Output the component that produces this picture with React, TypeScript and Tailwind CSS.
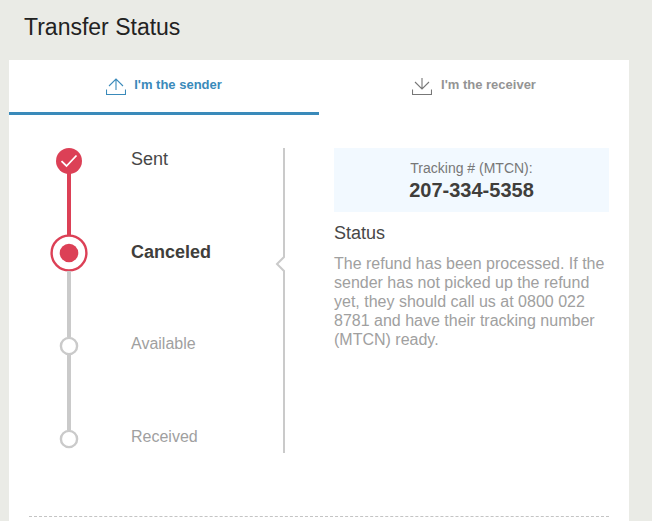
import React from 'react';

interface TabProps {
    label: string;
    active?: boolean;
    icon: React.ReactNode;
}

const UploadIcon: React.FC = () => (
    <svg width="20" height="18" viewBox="0 0 20 18" fill="none" stroke="currentColor" strokeWidth="1.1" aria-hidden="true">
        <path d="M0.5 11.5v5h19v-5" />
        <path d="M10 1v11M3 8l7-7 7 7" />
    </svg>
);

const DownloadIcon: React.FC = () => (
    <svg width="20" height="18" viewBox="0 0 20 18" fill="none" stroke="currentColor" strokeWidth="1.1" aria-hidden="true">
        <path d="M0.5 11.5v5h19v-5" />
        <path d="M10 0v11M3 4l7 7 7-7" />
    </svg>
);

const Tab: React.FC<TabProps> = ({ label, active, icon }) => (
    <button
        className={`flex h-[55px] flex-1 items-start justify-center border-b-[3px] pt-[17px] ${
            active ? 'border-[#3a8aba] text-[#3a8aba]' : 'border-transparent text-[#949494]'
        }`}
    >
        <span className={`mt-px ${active ? 'mr-2' : 'mr-[9px] text-[#777777]'}`}>{icon}</span>
        <span className="text-[13px] leading-4 font-bold">{label}</span>
    </button>
);

const steps = [
    { label: 'Sent', state: 'done', row: 'h-[86px]', text: 'text-[18px] mt-px text-[#474747]' },
    { label: 'Canceled', state: 'current', row: 'h-[102px]', text: 'text-[18px] mt-2 font-bold text-[#403e3b]' },
    { label: 'Available', state: 'pending', row: 'h-[93px]', text: 'text-[16px] -mt-0.5 text-[#a0a0a0]' },
    { label: 'Received', state: 'pending', row: 'h-5', text: 'text-[16px] -mt-0.5 text-[#a0a0a0]' },
];

const Marker: React.FC<{ state: string }> = ({ state }) => {
    if (state === 'done') {
        return (
            <svg className="shrink-0" width="26" height="26" viewBox="0 0 26 26" fill="none" aria-hidden="true">
                <circle cx="13" cy="13" r="13" fill="#dc4056" />
                <path d="M5.5 13.2l5 4.8L20.5 7.5" stroke="white" strokeWidth="1.8" />
            </svg>
        );
    }
    if (state === 'current') {
        return (
            <svg className="shrink-0" width="38" height="38" viewBox="0 0 38 38" fill="none" aria-hidden="true">
                <circle cx="19" cy="19" r="17.4" stroke="#dc4056" strokeWidth="2.4" />
                <circle cx="19" cy="19" r="9.3" fill="#dc4056" />
            </svg>
        );
    }
    return (
        <svg className="shrink-0" width="20" height="20" viewBox="0 0 20 20" fill="none" aria-hidden="true">
            <circle cx="10" cy="10" r="8.1" stroke="#cacaca" strokeWidth="2.4" />
        </svg>
    );
};

const Timeline: React.FC = () => (
    <ol className="w-[246px] pl-[21px]">
        {steps.map((step, i) => (
            <li key={step.label} className={`flex ${step.row}`}>
                <div className="flex w-[38px] flex-col items-center">
                    <Marker state={step.state} />
                    {i < steps.length - 1 && (
                        <div className={`-my-px w-1 flex-1 ${step.state === 'done' ? 'bg-[#dc4056]' : 'bg-[#cacaca]'}`} />
                    )}
                </div>
                <span className={`ml-[43px] leading-5 ${step.text}`}>{step.label}</span>
            </li>
        ))}
    </ol>
);

export default function App() {
    return (
        <div className="h-[521px] overflow-hidden bg-[#eaebe6] pl-[9px] font-['Liberation_Sans',Arial,sans-serif]">
            <h1 className="h-[60px] pt-[13px] pl-[15px] text-[23px] leading-7 text-[#222222]">Transfer Status</h1>
            <main className="h-[461px] w-[620px] bg-white">
                <div className="flex">
                    <Tab label="I'm the sender" active icon={<UploadIcon />} />
                    <Tab label="I'm the receiver" icon={<DownloadIcon />} />
                </div>

                <div className="flex h-[401px] pt-[33px] pl-5">
                    <Timeline />
                    <svg width="10" height="305" viewBox="0 0 10 305" fill="none" stroke="#cacaca" strokeWidth="2" aria-hidden="true">
                        <path d="M9 0v109l-7 7 7 7v182" />
                    </svg>
                    <section className="ml-[49px] w-[275px]">
                        <div className="h-16 bg-[#f2f9ff] pt-3 text-center">
                            <p className="text-[14px] leading-4 text-[#777777]">Tracking # (MTCN):</p>
                            <p className="mt-0.5 text-[20px] leading-6 font-bold text-[#403e3b]">207-334-5358</p>
                        </div>
                        <h2 className="mt-[11px] text-[18px] leading-5 text-[#474747]">Status</h2>
                        <p className="mt-[11px] text-[16px] leading-[19px] text-[#a0a0a0]">
                            The refund has been processed. If the sender has not picked up the refund yet, they should call us at 0800 022 8781 and have their tracking number (MTCN) ready.
                        </p>
                    </section>
                </div>
                <hr className="mx-5 border-t border-dashed border-[#c4c4c4]" />
            </main>
        </div>
    );
}
